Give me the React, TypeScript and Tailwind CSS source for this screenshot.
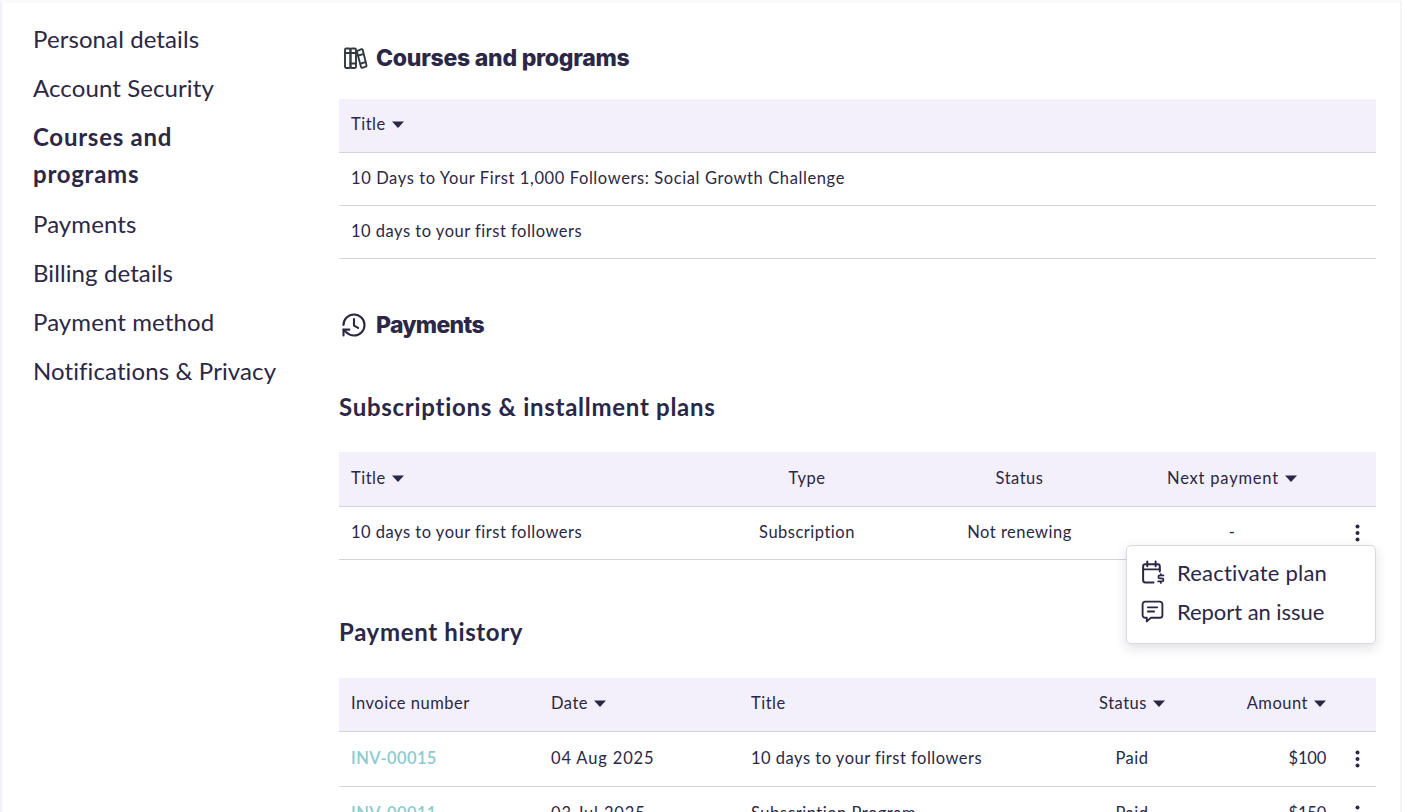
import React from "react";

const Caret = () => (
  <svg width="12" height="7" viewBox="0 0 12 7" className="ml-[6px] inline-block shrink-0">
    <path d="M0 0.5h12L6 7z" fill="#2b2746" />
  </svg>
);

const Kebab = () => (
  <svg width="5" height="18" viewBox="0 0 5 18" className="block">
    <circle cx="2.5" cy="2.5" r="2" fill="#2b2746" />
    <circle cx="2.5" cy="9" r="2" fill="#2b2746" />
    <circle cx="2.5" cy="15.5" r="2" fill="#2b2746" />
  </svg>
);

const BooksIcon = () => (
  <svg width="28" height="28" viewBox="0 0 28 28" fill="none" stroke="#2f3a3f" strokeWidth="1.9" strokeLinejoin="round" strokeLinecap="round">
    <rect x="5" y="4.5" width="5.5" height="19.5" rx="1.2" />
    <rect x="10.5" y="4.5" width="5.5" height="19.5" rx="1.2" />
    <path d="M5 9h5.5M10.5 9H16M10.5 19.5H16" />
    <path d="M17.5 6.8l4-1.6a1 1 0 0 1 1.2.6l3.8 15.6a1 1 0 0 1-.7 1.2l-3.6 1.2a1 1 0 0 1-1.2-.7L17 8a1 1 0 0 1 .5-1.2z" />
    <path d="M18.5 11.5l4.8-1.4M21 19.5l4.4-1.3" />
  </svg>
);

const HistoryIcon = () => (
  <svg width="28" height="28" viewBox="0 0 24 24" fill="none" stroke="#2b2746" strokeWidth="1.8" strokeLinecap="round" strokeLinejoin="round">
    <g transform="matrix(1 0 0 -1 0 24)">
      <path d="M3 12a9 9 0 1 0 9-9 9.75 9.75 0 0 0-6.74 2.74L3 8" />
      <path d="M3 3v5h5" />
    </g>
    <path d="M12 7v5.5l3.5 2" />
  </svg>
);

const CalendarIcon = () => (
  <svg width="25" height="25" viewBox="0 0 24 24" fill="none" stroke="#2b2746" strokeWidth="1.9" strokeLinecap="round" strokeLinejoin="round">
    <path d="M13 21.5H5a2 2 0 0 1-2-2V6a2 2 0 0 1 2-2h12a2 2 0 0 1 2 2v5" />
    <path d="M7 1.5V6M15 1.5V6M3 9h16" />
    <path d="M22.5 14.8h-3.4a1.4 1.4 0 0 0 0 2.9h2a1.4 1.4 0 0 1 0 2.9h-3.6M20 13.5v1.3M20 20.6V22" strokeWidth="1.7" />
  </svg>
);

const MessageIcon = () => (
  <svg width="25" height="25" viewBox="0 0 24 24" fill="none" stroke="#2b2746" strokeWidth="1.8" strokeLinecap="round" strokeLinejoin="round">
    <path d="M5 2.5h14A2.5 2.5 0 0 1 21.5 5v10.5A2.5 2.5 0 0 1 19 18h-8.5l-4 3.5V18H5a2.5 2.5 0 0 1-2.5-2.5V5A2.5 2.5 0 0 1 5 2.5z" />
    <path d="M7.5 8h9M7.5 12h6" />
  </svg>
);

function SideItem({ children, active, className = "" }: { children: React.ReactNode; active?: boolean; className?: string }) {
  return (
    <div className={`text-[24px] leading-[37px] ${active ? "font-bold tracking-[0.75px]" : "font-normal tracking-[0.1px]"} ${className}`}>
      {children}
    </div>
  );
}

function SectionTitle({ icon, children, className = "", textClass = "" }: { icon: React.ReactNode; children: React.ReactNode; className?: string; textClass?: string }) {
  return (
    <div className={`flex items-center gap-[8px] pl-[1px] ${className}`}>
      {icon}
      <span className={`text-[23px] font-extrabold leading-[30px] [font-family:'Inter','Liberation_Sans',sans-serif] ${textClass}`}>{children}</span>
    </div>
  );
}

function SortLabel({ children }: { children: React.ReactNode }) {
  return (
    <span className="inline-flex items-center">
      {children}
      <Caret />
    </span>
  );
}

export default function App() {
  return (
    <div className="relative h-[812px] w-[1402px] overflow-hidden bg-white text-[#2b2746] [font-family:'Lato','Liberation_Sans',sans-serif]">
      <div className="flex h-full border-l-2 border-r-2 border-t-[3px] border-l-[#f3f0fb] border-r-[#f5f5f5] border-t-[#fafafa]">
        <aside className="w-[337px] shrink-0 pl-[31px] pt-[17px]">
          <div className="flex w-[250px] flex-col">
            <SideItem>Personal details</SideItem>
            <SideItem className="mt-[12px]">Account Security</SideItem>
            <SideItem active className="mt-[12px] w-[180px]">Courses and programs</SideItem>
            <SideItem className="mt-[13px]">Payments</SideItem>
            <SideItem className="mt-[12px]">Billing details</SideItem>
            <SideItem className="mt-[12px]">Payment method</SideItem>
            <SideItem className="mt-[12px] whitespace-nowrap">Notifications &amp; Privacy</SideItem>
          </div>
        </aside>

        <main className="w-[1037px] shrink-0 pt-[40px] text-[16.5px] tracking-[0.5px]">
          <SectionTitle icon={<BooksIcon />} textClass="tracking-[-0.25px]">Courses and programs</SectionTitle>

          <div className="mt-[26px] flex h-[54px] items-center border-b border-[#d3d2da] bg-[#f3f0fb] pb-[2px] pl-[12px]">
            <SortLabel>Title</SortLabel>
          </div>
          <div className="flex h-[53px] items-center border-b border-[#d3d2da] pb-[2px] pl-[12px] tracking-[0.6px]">10 Days to Your First 1,000 Followers: Social Growth Challenge</div>
          <div className="flex h-[53px] items-center border-b border-[#d3d2da] pb-[2px] pl-[12px]">10 days to your first followers</div>

          <SectionTitle icon={<HistoryIcon />} className="mt-[51px]" textClass="tracking-[-0.7px]">Payments</SectionTitle>

          <h3 className="mt-[52px] text-[24px] font-bold leading-[30px] tracking-[0.72px]">Subscriptions &amp; installment plans</h3>

          <div className="mt-[30px] flex h-[55px] items-center border-b border-[#d3d2da] bg-[#f3f0fb] pb-[2px] pl-[12px]">
            <div className="w-[356px]"><SortLabel>Title</SortLabel></div>
            <div className="w-[200px] text-center">Type</div>
            <div className="w-[225px] text-center">Status</div>
            <div className="w-[200px] text-center tracking-[0.8px]"><SortLabel>Next payment</SortLabel></div>
          </div>
          <div className="flex h-[53px] items-center border-b border-[#d3d2da] pb-[2px] pl-[12px]">
            <div className="w-[356px]">10 days to your first followers</div>
            <div className="w-[200px] text-center">Subscription</div>
            <div className="w-[225px] text-center">Not renewing</div>
            <div className="w-[200px] text-center">-</div>
            <div className="ml-[23px] mt-[2px]"><Kebab /></div>
          </div>

          <h3 className="mt-[57px] text-[24px] font-bold leading-[30px] tracking-[0.65px]">Payment history</h3>

          <div className="mt-[31px] flex h-[54px] items-center border-b border-[#d3d2da] bg-[#f3f0fb] pb-[2px] pl-[12px]">
            <div className="w-[200px]">Invoice number</div>
            <div className="w-[200px]"><SortLabel>Date</SortLabel></div>
            <div className="w-[292px]">Title</div>
            <div className="w-[178px] text-center"><SortLabel>Status</SortLabel></div>
            <div className="w-[105px] text-right"><SortLabel>Amount</SortLabel></div>
          </div>
          {[
            ["INV-00015", "04 Aug 2025", "10 days to your first followers", "$100"],
            ["INV-00011", "03 Jul 2025", "Subscription Program", "$150"],
          ].map((r) => (
            <div key={r[0]} className="flex h-[55px] shrink-0 items-center border-b border-[#d3d2da] pb-[2px] pl-[12px]">
              <div className="w-[200px] font-semibold tracking-[0.4px] text-[#8bcbcf]">{r[0]}</div>
              <div className="w-[200px] tracking-[0.85px]">{r[1]}</div>
              <div className="w-[292px]">{r[2]}</div>
              <div className="w-[178px] text-center">Paid</div>
              <div className="w-[105px] text-right tracking-[-0.2px]">{r[3]}</div>
              <div className="ml-[29px] mt-[2px]"><Kebab /></div>
            </div>
          ))}
        </main>
      </div>

      <div className="absolute left-[1126px] top-[545px] flex h-[99px] w-[250px] flex-col justify-center gap-[7px] rounded-[5px] border border-[#d9d8de] bg-white pb-[6px] pl-[13px] text-[22px] shadow-[0_4px_12px_rgba(43,39,70,0.15)]">
        <div className="flex h-[32px] items-center gap-[12px] tracking-[0.2px]"><CalendarIcon /><span>Reactivate plan</span></div>
        <div className="flex h-[32px] items-center gap-[12px] tracking-[-0.05px]"><MessageIcon /><span>Report an issue</span></div>
      </div>
    </div>
  );
}
